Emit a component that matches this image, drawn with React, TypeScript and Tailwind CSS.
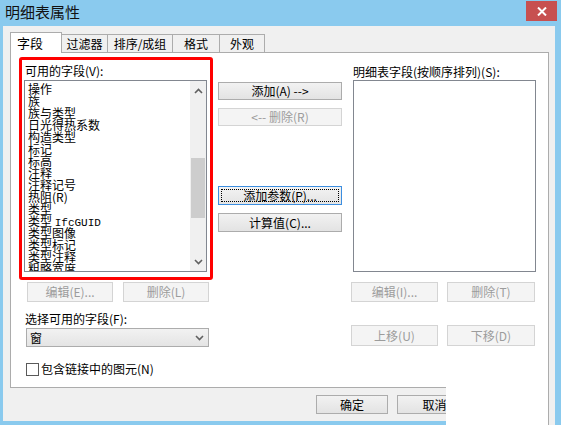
import React from "react";

const items: React.ReactNode[] = [
  "操作",
  "族",
  "族与类型",
  "日光得热系数",
  "构造类型",
  "标记",
  "标高",
  "注释",
  "注释记号",
  "热阻(R)",
  "类型",
  <>
    类型 <span className="font-['Liberation_Mono',monospace] text-[11px]">IfcGUID</span>
  </>,
  "类型图像",
  "类型标记",
  "类型注释",
  "粗略宽度",
];

function Btn({
  children,
  disabled,
  focused,
  className = "",
}: {
  children: React.ReactNode;
  disabled?: boolean;
  focused?: boolean;
  className?: string;
}) {
  const base = disabled
    ? "border-[#d4d4d4] bg-[#f4f4f4] text-[#9c9c9c]"
    : focused
    ? "border-[#3c8ee0] bg-gradient-to-b from-[#f3f3f3] to-[#e4e4e4] text-black"
    : "border-[#acacac] bg-gradient-to-b from-[#f2f2f2] to-[#e3e3e3] text-black";
  return (
    <div
      className={`relative flex items-center justify-center border text-[12px] leading-[14px] ${base} ${className}`}
    >
      {focused && (
        <div className="absolute inset-[2px] border border-dotted border-black" />
      )}
      <span className="relative">{children}</span>
    </div>
  );
}

function Chevron({ up }: { up?: boolean }) {
  return (
    <svg width="9" height="6" viewBox="0 0 9 6">
      <polyline
        points={up ? "1,5 4.5,1.5 8,5" : "1,1 4.5,4.5 8,1"}
        fill="none"
        stroke="#606060"
        strokeWidth="1.6"
      />
    </svg>
  );
}

export default function App() {
  return (
    <div className="relative flex h-[425px] w-[561px] flex-col overflow-hidden bg-[#8acaee] font-['Noto_Sans_CJK_SC','Noto_Sans',sans-serif] text-black">
      {/* Title bar */}
      <div className="flex h-[26px] items-start justify-between">
        <div className="pl-[5px] pt-[2px] text-[15px] leading-[20px] text-[#111]">
          明细表属性
        </div>
        <div className="mr-[4px] mt-[1px] flex h-[20px] w-[31px] items-center justify-center bg-[#c75050]">
          <svg width="10" height="9" viewBox="0 0 10 9">
            <path d="M1 0.5 L9 8.5 M9 0.5 L1 8.5" stroke="white" strokeWidth="2" />
          </svg>
        </div>
      </div>

      {/* Client area */}
      <div className="mb-[4px] ml-[3px] mr-[6px] flex flex-1 flex-col bg-[#f0f0f0]">
        {/* Tabs */}
        <div className="ml-[7px] mt-[6px] flex h-[20px] items-end">
          <div className="relative z-10 -mb-px flex h-[21px] w-[52px] items-start border border-b-0 border-[#acacac] bg-white pl-[6px] pt-[2px] text-[13px] leading-[15px]">
            字段
          </div>
          {[
            ["过滤器", "w-[47px]"],
            ["排序/成组", "w-[66px]"],
            ["格式", "w-[48px]"],
            ["外观", "w-[46px]"],
          ].map(([t, w]) => (
            <div
              key={t}
              className={`-ml-px flex h-[18px] items-start justify-center border border-b-0 border-[#acacac] bg-[#f0f0f0] pt-[2px] text-[12px] leading-[14px] first:ml-0 ${w}`}
            >
              {t}
            </div>
          ))}
        </div>

        {/* Panel */}
        <div className="ml-[7px] flex h-[336px] w-[539px] border border-[#acacac] bg-white">
          {/* Left column */}
          <div className="ml-[13px] flex w-[185px] flex-col">
            <div className="mt-[10px] h-[15px] pl-px text-[12px] leading-[15px]">
              可用的字段(V):
            </div>
            <div className="mt-[2px] flex h-[192px] w-[183px] border border-[#828790] bg-white">
              <div className="flex-1 overflow-hidden pl-[3px] pt-[2px]">
                {items.map((it, i) => (
                  <div
                    key={i}
                    className="h-[12px] whitespace-pre text-[12px] leading-[12px]"
                  >
                    {it}
                  </div>
                ))}
              </div>
              <div className="flex w-[16px] flex-col items-center bg-[#f0f0f0]">
                <div className="flex h-[17px] items-center justify-center pt-[3px]">
                  <Chevron up />
                </div>
                <div className="mt-[60px] h-[60px] w-[14px] bg-[#cdcdcd]" />
                <div className="flex-1" />
                <div className="flex h-[17px] items-center justify-center pb-[2px]">
                  <Chevron />
                </div>
              </div>
            </div>
            <div className="mt-[10px] flex gap-[10px] pl-[3px]">
              <Btn disabled className="h-[20px] w-[86px]">
                编辑(E)...
              </Btn>
              <Btn disabled className="h-[20px] w-[86px]">
                删除(L)
              </Btn>
            </div>
            <div className="mt-[9px] h-[15px] pl-px text-[12px] leading-[15px]">
              选择可用的字段(F):
            </div>
            <div className="ml-[2px] mt-[2px] flex h-[19px] w-[183px] items-center justify-between border border-[#acacac] bg-gradient-to-b from-[#f2f2f2] to-[#e4e4e4] pl-[3px] pr-[4px] text-[12px] leading-[14px]">
              <span>窗</span>
              <Chevron />
            </div>
            <div className="ml-[2px] mt-[15px] flex items-center">
              <div className="h-[13px] w-[13px] border border-[#5a5a5a] bg-white" />
              <span className="ml-[2px] text-[12px] leading-[14px]">
                包含链接中的图元(N)
              </span>
            </div>
          </div>

          {/* Middle column */}
          <div className="ml-[9px] flex w-[124px] flex-col">
            <Btn className="mt-[29px] h-[18px] w-[124px]">添加(A) --&gt;</Btn>
            <Btn disabled className="mt-[8px] h-[18px] w-[124px]">
              &lt;-- 删除(R)
            </Btn>
            <Btn focused className="mt-[60px] h-[19px] w-[124px]">
              添加参数(P)...
            </Btn>
            <Btn className="mt-[8px] h-[19px] w-[124px]">计算值(C)...</Btn>
          </div>

          {/* Right column */}
          <div className="ml-[9px] flex w-[186px] flex-col">
            <div className="mt-[11px] h-[15px] pl-[2px] text-[12px] leading-[15px]">
              明细表字段(按顺序排列)(S):
            </div>
            <div className="ml-[2px] mt-px h-[192px] w-[183px] border border-[#828790] bg-white" />
            <div className="mt-[10px] flex gap-[9px]">
              <Btn disabled className="h-[20px] w-[87px]">
                编辑(I)...
              </Btn>
              <Btn disabled className="h-[20px] w-[88px]">
                删除(T)
              </Btn>
            </div>
            <div className="mt-[23px] flex gap-[9px]">
              <Btn disabled className="h-[21px] w-[87px]">
                上移(U)
              </Btn>
              <Btn disabled className="h-[21px] w-[88px]">
                下移(D)
              </Btn>
            </div>
          </div>
        </div>

        {/* Bottom buttons */}
        <div className="ml-[313px] mt-[7px] flex gap-[9px]">
          <Btn className="h-[19px] w-[72px]">确定</Btn>
          <Btn className="h-[19px] w-[75px]">取消</Btn>
        </div>
      </div>

      {/* Red annotation box */}
      <div className="absolute left-[19px] top-[57px] h-[223px] w-[194px] rounded-[3px] border-[3px] border-[#ff0000]" />

      {/* Cut-off corner (white patch) */}
      <div className="absolute left-[446px] top-[387px] flex h-[38px] w-[115px]">
        <div className="w-[102px] bg-white" />
        <div className="w-px bg-[#acacac]" />
        <div className="w-[6px] bg-[#f0f0f0]" />
        <div className="flex-1 bg-[#8acaee]" />
      </div>
    </div>
  );
}
